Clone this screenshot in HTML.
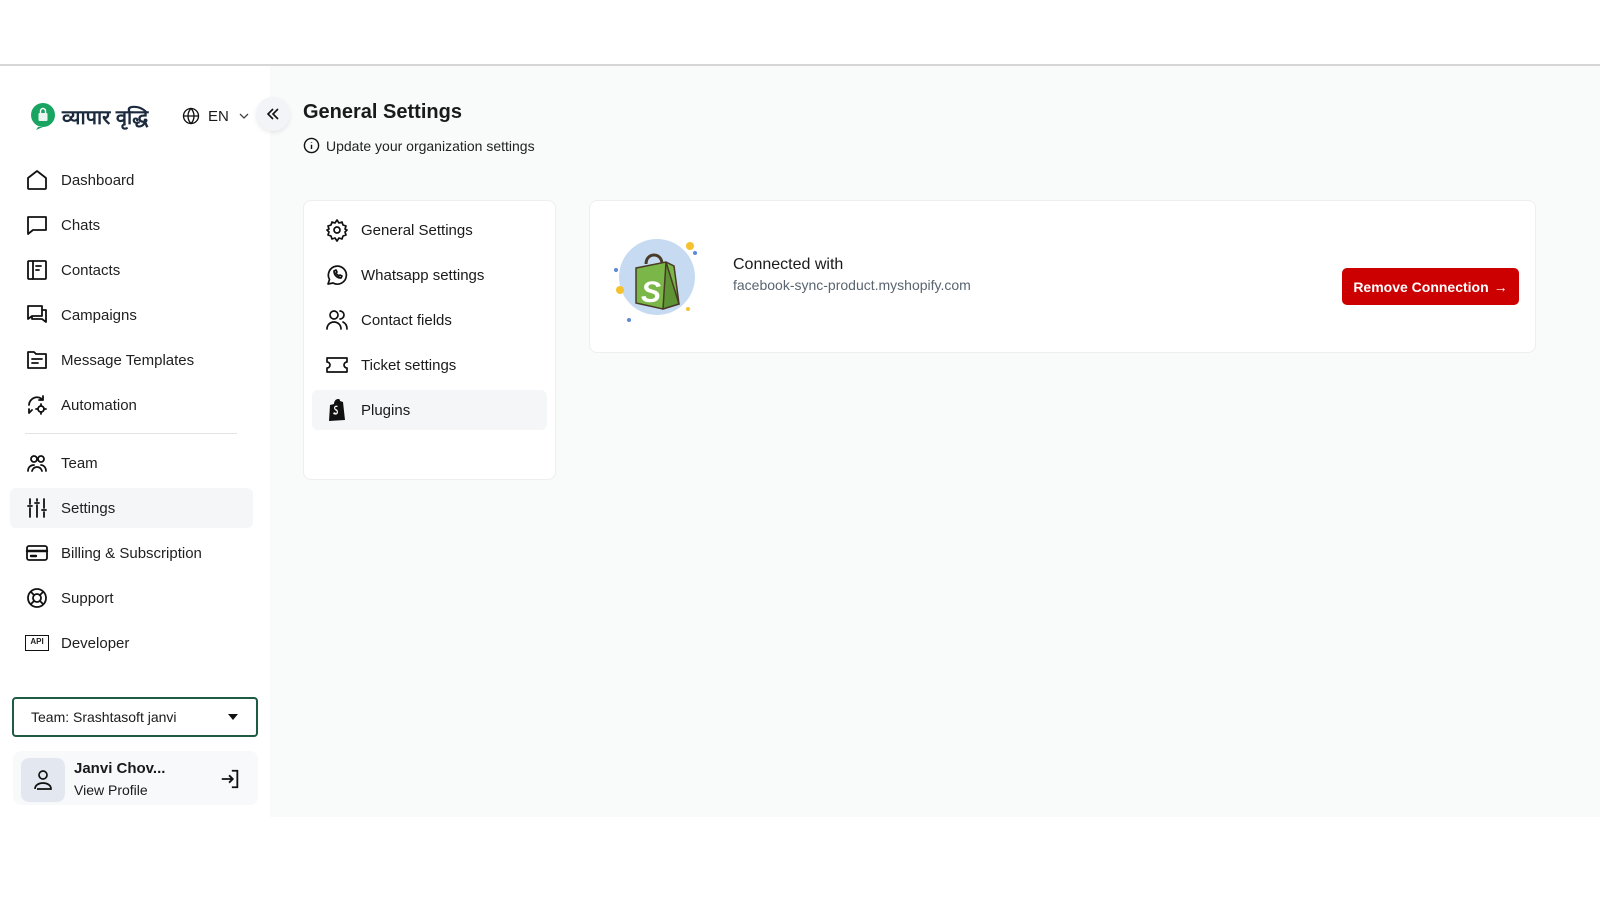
<!DOCTYPE html>
<html><head><meta charset="utf-8"><style>
*{box-sizing:border-box;margin:0;padding:0}
body{width:1600px;height:900px;background:#fff;font-family:"Liberation Sans",sans-serif;color:#1a1a1a;position:relative;overflow:hidden}
.top{position:absolute;left:0;top:0;width:1600px;height:66px;border-bottom:2px solid #d6d6d6;background:#fff}
.side{position:absolute;left:0;top:66px;width:270px;height:751px;background:#fff}
.main{position:absolute;left:270px;top:66px;width:1330px;height:751px;background:#f9fafa}
.nav{position:absolute;left:10px;width:243px;height:40px;display:flex;align-items:center;padding-left:15px;font-size:15px;color:#1f1f1f;border-radius:6px}
.nav svg{width:24px;height:24px;margin-right:12px;fill:none;stroke:#111;stroke-width:1.8;stroke-linecap:round;stroke-linejoin:round}
.nav.act{background:#f5f6f8}
.card{position:absolute;background:#fff;border:1px solid #eceef0;border-radius:8px}
.sn{position:absolute;left:8px;width:235px;height:40px;display:flex;align-items:center;padding-left:13px;font-size:15px;border-radius:6px}
.sn svg{width:24px;height:24px;margin-right:12px;fill:none;stroke:#111;stroke-width:1.7;stroke-linecap:round;stroke-linejoin:round}
</style></head><body>
<div class="top"></div>
<div class="side">
 <div style="position:absolute;left:30px;top:36px;display:flex;align-items:center">
  <svg width="28" height="28" viewBox="0 0 28 28"><circle cx="13" cy="13" r="12" fill="#1aa461"/><path d="M8 25 L6 28 L13 25Z" fill="#1aa461"/><rect x="8.5" y="11" width="9" height="8" rx="1" fill="#fff" opacity=".9"/><path d="M10.5 11V9a2.5 2.5 0 0 1 5 0v2" stroke="#fff" stroke-width="1.4" fill="none"/></svg>
  <span style="font-family:'Liberation Sans','Noto Sans CJK SC',sans-serif;font-weight:bold;font-size:20px;color:#1b2a3c;margin-left:4px">व्यापार वृद्धि</span>
 </div>
 <div style="position:absolute;left:182px;top:41px;display:flex;align-items:center;font-size:15px">
  <svg width="18" height="18" viewBox="0 0 24 24" fill="none" stroke="#111" stroke-width="1.8"><circle cx="12" cy="12" r="10"/><path d="M2 12h20M12 2c3 3 4 6.5 4 10s-1 7-4 10c-3-3-4-6.5-4-10s1-7 4-10z"/></svg>
  <span style="margin-left:8px">EN</span>
  <svg width="12" height="12" viewBox="0 0 12 12" style="margin-left:9px" fill="none" stroke="#444" stroke-width="1.3"><path d="M2 4l4 4 4-4"/></svg>
 </div>
 <div style="position:absolute;left:256px;top:31px;width:34px;height:34px;border-radius:50%;background:#f2f4f7;box-shadow:0 2px 4px rgba(0,0,0,.08);z-index:3;display:flex;align-items:center;justify-content:center">
  <svg width="16" height="16" viewBox="0 0 16 16" fill="none" stroke="#111" stroke-width="1.6"><path d="M8 3L3 8l5 5M13 3L8 8l5 5"/></svg>
 </div>
 <div class="nav" style="top:94px"><svg viewBox="0 0 24 24"><path d="M3 10l9-7 9 7v10a1 1 0 0 1-1 1H4a1 1 0 0 1-1-1z"/></svg>Dashboard</div>
 <div class="nav" style="top:139px"><svg viewBox="0 0 24 24"><path d="M3 4h18v13H8l-5 4z"/></svg>Chats</div>
 <div class="nav" style="top:184px"><svg viewBox="0 0 24 24"><rect x="3" y="3" width="18" height="18" rx="1"/><path d="M8 3v18M11 8h5M11 12h3"/></svg>Contacts</div>
 <div class="nav" style="top:229px"><svg viewBox="0 0 24 24"><path d="M3 3h14v10H7l-4 3zM7 13v3h10l4 3V7h-4"/></svg>Campaigns</div>
 <div class="nav" style="top:274px"><svg viewBox="0 0 24 24"><path d="M3 4h6l2 2h10v14H3zM7 11h10M7 15h6"/></svg>Message Templates</div>
 <div class="nav" style="top:319px"><svg viewBox="0 0 24 24"><path d="M4 12a8 8 0 0 1 14-5M18 3v4h-4M4 16v4M4 20l3-3"/><circle cx="16" cy="16" r="3"/><path d="M16 11v2M16 19v2M11 16h2M19 16h2"/></svg>Automation</div>
 <div style="position:absolute;left:25px;top:367px;width:212px;height:1px;background:#e3e3e3"></div>
 <div class="nav" style="top:377px"><svg viewBox="0 0 24 24"><circle cx="9" cy="8" r="3"/><circle cx="16" cy="8" r="3"/><path d="M3 20c0-4 3-6 6-6M21 20c0-4-3-6-5-6M7 20c1-3 3-4 5-4s4 1 5 4"/></svg>Team</div>
 <div class="nav act" style="top:422px"><svg viewBox="0 0 24 24"><path d="M5 3v5M5 12v9M3 10h4M12 3v2M12 9v12M10 7h4M19 3v9M19 16v5M17 14h4"/></svg>Settings</div>
 <div class="nav" style="top:467px"><svg viewBox="0 0 24 24"><rect x="2" y="5" width="20" height="14" rx="2"/><path d="M2 10h20M6 15h5" stroke-width="2.4"/></svg>Billing &amp; Subscription</div>
 <div class="nav" style="top:512px"><svg viewBox="0 0 24 24"><circle cx="12" cy="12" r="9"/><circle cx="12" cy="12" r="4"/><path d="M6 6l3 3M18 6l-3 3M6 18l3-3M18 18l-3-3"/></svg>Support</div>
 <div class="nav" style="top:557px"><span style="display:inline-block;width:24px;height:16px;border:1.8px solid #111;font-size:8px;font-weight:bold;line-height:12px;text-align:center;margin-right:12px">API</span>Developer</div>
 <div style="position:absolute;left:12px;top:631px;width:246px;height:40px;border:2px solid #1d5c43;border-radius:4px;display:flex;align-items:center;padding-left:17px;font-size:14px">Team: Srashtasoft janvi<span style="position:absolute;right:18px;top:15px;border-left:5px solid transparent;border-right:5px solid transparent;border-top:6px solid #111"></span></div>
 <div style="position:absolute;left:13px;top:685px;width:245px;height:54px;background:#f8f9fb;border-radius:8px">
  <div style="position:absolute;left:8px;top:7px;width:44px;height:44px;border-radius:8px;background:#e3e8f0;display:flex;align-items:center;justify-content:center"><svg width="22" height="24" viewBox="0 0 22 24" fill="none" stroke="#111" stroke-width="1.7"><circle cx="11" cy="7" r="4"/><path d="M3 21c0-4 4-6 8-6s8 2 8 6H5"/></svg></div>
  <div style="position:absolute;left:61px;top:9px;font-size:15px;font-weight:bold">Janvi Chov...</div>
  <div style="position:absolute;left:61px;top:31px;font-size:14px">View Profile</div>
  <svg style="position:absolute;left:206px;top:17px" width="22" height="22" viewBox="0 0 24 24" fill="none" stroke="#111" stroke-width="2"><path d="M14 3h6v18h-6M3 12h12M11 8l4 4-4 4"/></svg>
 </div>
</div>
<div class="main">
 <div style="position:absolute;left:33px;top:35px;font-size:20px;font-weight:bold;color:#1a1a1a">General Settings</div>
 <div style="position:absolute;left:33px;top:71px;display:flex;align-items:center;font-size:14px;color:#222"><svg width="17" height="17" viewBox="0 0 24 24" fill="none" stroke="#111" stroke-width="2"><circle cx="12" cy="12" r="10"/><path d="M12 11v6M12 7v1"/></svg><span style="margin-left:6px">Update your organization settings</span></div>
 <div class="card" style="left:33px;top:134px;width:253px;height:280px">
  <div class="sn" style="top:9px"><svg viewBox="0 0 24 24"><circle cx="12" cy="12" r="3"/><path d="M12 2l2 3 3-1 1 3 3 1-1 3 2 1-2 2 1 3-3 1-1 3-3-1-2 3-2-3-3 1-1-3-3-1 1-3-2-2 2-1-1-3 3-1 1-3 3 1z"/></svg>General Settings</div>
  <div class="sn" style="top:54px"><svg viewBox="0 0 24 24"><path d="M3 21l1.5-4.5A9 9 0 1 1 8 20z"/><path d="M9 8c0 4 3 7 7 7l1-2-2-1-1 1c-1-.5-2-1.5-3-3l1-1-1-2z"/></svg>Whatsapp settings</div>
  <div class="sn" style="top:99px"><svg viewBox="0 0 24 24"><circle cx="9" cy="7" r="4"/><path d="M2 21c0-4 3-7 7-7s7 3 7 7M15 3a4 4 0 0 1 0 8M18 14c2 1 4 3 4 7"/></svg>Contact fields</div>
  <div class="sn" style="top:144px"><svg viewBox="0 0 24 24"><path d="M2 5h20v4a3 3 0 0 0 0 6v4H2v-4a3 3 0 0 0 0-6z"/></svg>Ticket settings</div>
  <div class="sn" style="top:189px;background:#f5f6f8"><svg viewBox="0 0 24 24" style="stroke:none;fill:#111"><path d="M5 7l4-1c0-3 2-5 4-5s2 1 2 2l3 1 2 18-16 1zM13 8c-2-1-4 0-4 2s3 3 3 4-2 1-3 0l-1 2c2 1 5 1 5-2s-3-3-3-4 2-1 2-1z"/></svg>Plugins</div>
 </div>
 <div class="card" style="left:319px;top:134px;width:947px;height:153px">
  <svg style="position:absolute;left:24px;top:33px" width="90" height="90" viewBox="0 0 90 90">
   <circle cx="43" cy="43" r="38" fill="#c6dbf2"/>
   <path d="M32 30c0-12 16-12 16 0" stroke="#4a3a28" stroke-width="3" fill="none"/>
   <path d="M22 34l30-6 8 4 5 38-16 5-27-6z" fill="#7ab648" stroke="#4a3a28" stroke-width="1.5"/>
   <path d="M52 28l13 42-16 5z" fill="#5e9434" stroke="#4a3a28" stroke-width="1.5"/>
   <text x="27" y="68" font-family="Liberation Sans" font-weight="bold" font-style="italic" font-size="30" fill="#fff">S</text>
   <circle cx="76" cy="12" r="4" fill="#f5c12e"/><circle cx="81" cy="19" r="2" fill="#5d8ad4"/><circle cx="6" cy="56" r="4" fill="#f5c12e"/><circle cx="2" cy="36" r="2" fill="#5d8ad4"/><circle cx="15" cy="86" r="2" fill="#5d8ad4"/><circle cx="74" cy="75" r="2" fill="#f5c12e"/>
  </svg>
  <div style="position:absolute;left:143px;top:55px;font-size:16px;color:#1a1a1a">Connected with</div>
  <div style="position:absolute;left:143px;top:76px;font-size:14px;color:#5a6570">facebook-sync-product.myshopify.com</div>
  <div style="position:absolute;left:752px;top:67px;width:177px;height:37px;background:#cc0000;border-radius:5px;color:#fff;font-size:14px;font-weight:bold;display:flex;align-items:center;justify-content:center">Remove Connection <span style="margin-left:5px">→</span></div>
 </div>
</div>
</body></html>
